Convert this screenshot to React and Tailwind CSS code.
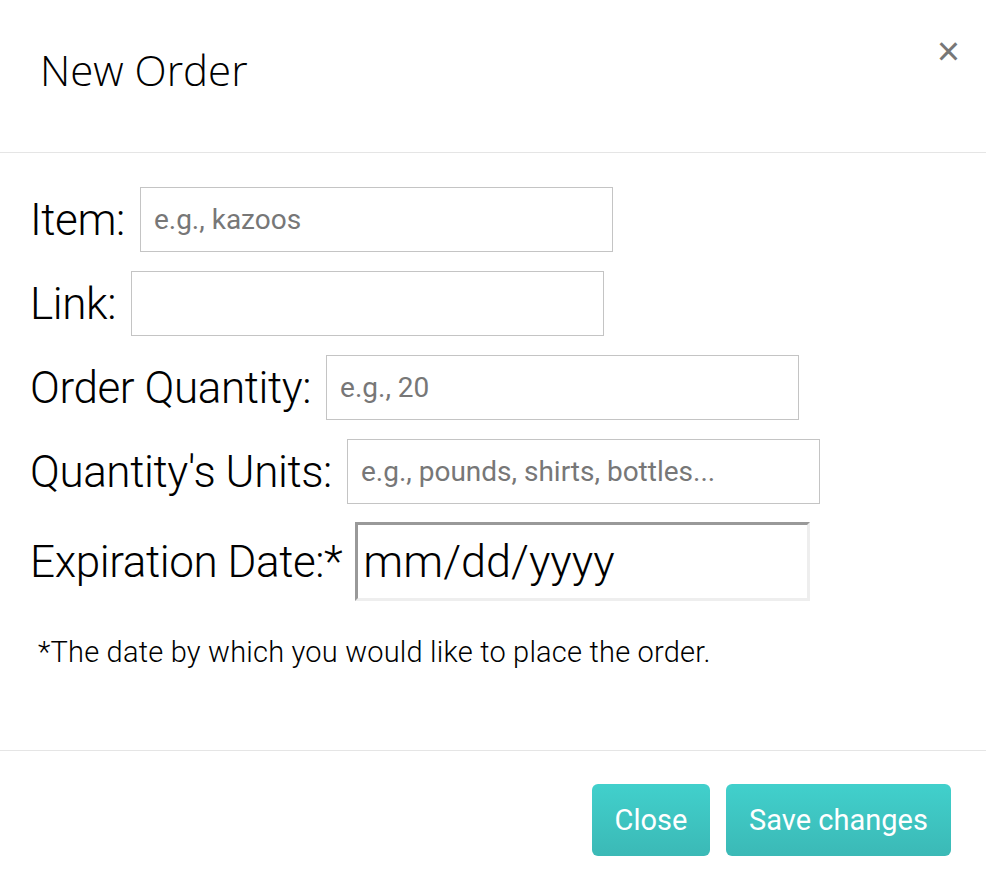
import React from 'react'

const Field = ({ label, placeholder }) => (
    <div className="flex items-center gap-[15px]">
        <label className="text-[44px] font-light tracking-[-0.4px] text-black leading-none">{label}</label>
        <input
            type="text"
            placeholder={placeholder}
            className="w-[473px] h-[65px] border border-[#c4c4c4] px-[13px] text-[28px] text-black placeholder:text-[#777] outline-none"
        />
    </div>
)

const App = () => {
    return (
        <div className="w-[986px] h-[882px] bg-white flex flex-col font-['Roboto',sans-serif]">
            <header className="h-[153px] border-b border-[#e5e5e5] flex items-start justify-between px-[40px] pt-[49px]">
                <h1 className="font-['Open_Sans',sans-serif] font-light text-[42px] leading-none text-black">New Order</h1>
                <button className="text-[#777] text-[40px] leading-none font-['Liberation_Sans',sans-serif] -mr-[14px] -mt-[18px]">×</button>
            </header>

            <main className="h-[598px] border-b border-[#e5e5e5] px-[30px] pt-[34px] flex flex-col">
                <div className="flex flex-col gap-[19px]">
                    <Field label="Item:" placeholder="e.g., kazoos" />
                    <Field label="Link:" placeholder="" />
                    <Field label="Order Quantity:" placeholder="e.g., 20" />
                    <Field label="Quantity's Units:" placeholder="e.g., pounds, shirts, bottles..." />
                    <div className="flex items-center gap-[13px] mt-[-1px]">
                        <label className="text-[44px] font-light tracking-[-0.4px] text-black leading-none">Expiration Date:*</label>
                        <div className="w-[455px] h-[79px] border-[3px] border-t-[#999] border-l-[#999] border-r-[#eee] border-b-[#eee] flex items-center px-[5px]">
                            <span className="text-[45px] text-black font-light leading-none">mm/dd/yyyy</span>
                        </div>
                    </div>
                </div>
                <p className="mt-[30px] ml-[8px] text-[29px] font-light tracking-[0.2px] text-black">*The date by which you would like to place the order.</p>
            </main>

            <footer className="flex-1 flex items-start justify-end gap-[16px] pr-[35px] pt-[33px]">
                <button className="w-[118px] h-[72px] rounded-[6px] bg-gradient-to-b from-[#41d0cc] to-[#3bb9b6] text-white text-[29px] leading-none">Close</button>
                <button className="w-[225px] h-[72px] rounded-[6px] bg-gradient-to-b from-[#41d0cc] to-[#3bb9b6] text-white text-[29px] leading-none">Save changes</button>
            </footer>
        </div>
    )
}

export default App
